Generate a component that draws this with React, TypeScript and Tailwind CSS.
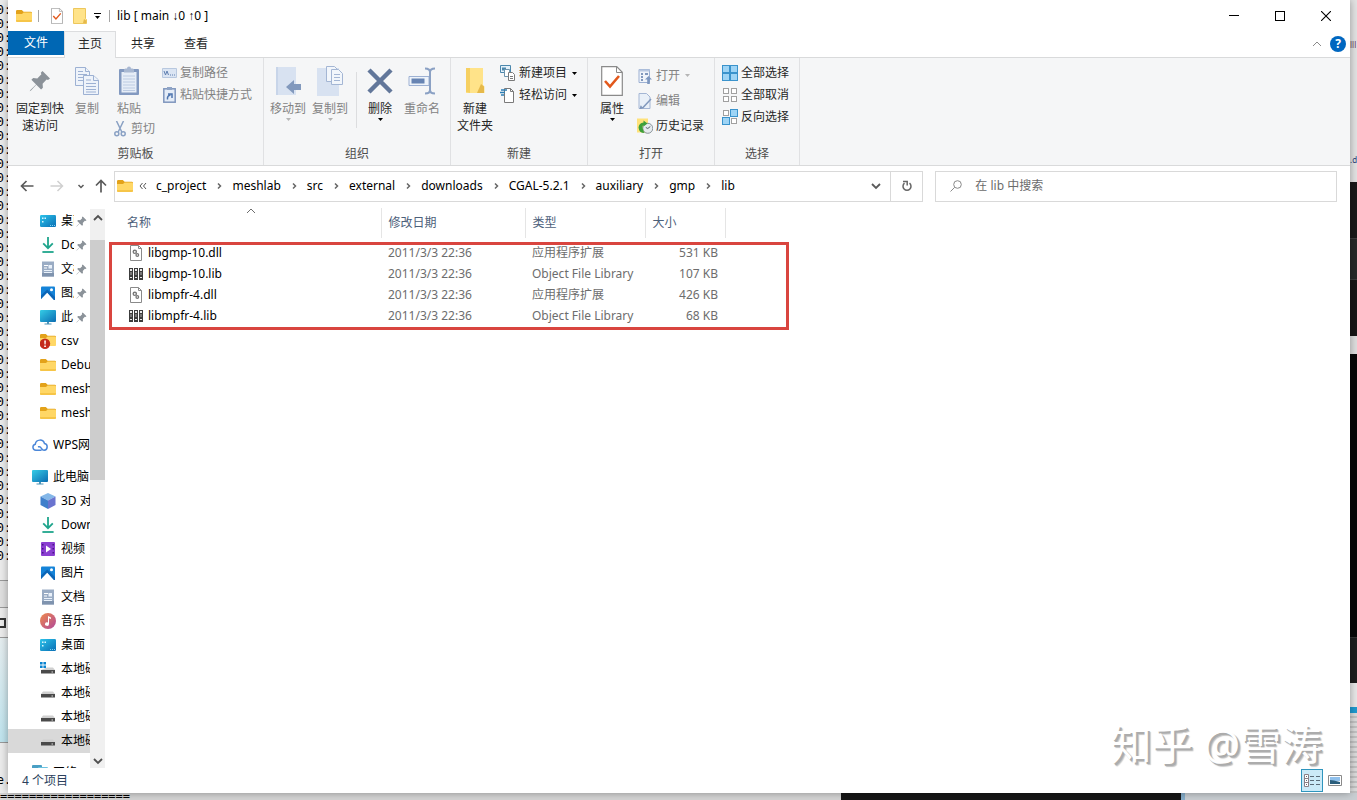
import React from "react";
import { clsx } from "clsx";

interface IconProps {
  className?: string;
}

/* ---------- Small shared glyphs ---------- */

const CaretDown = ({ className }: IconProps) => (
  <svg viewBox="0 0 5 3" className={clsx("w-[5px] h-[3px] shrink-0", className)} fill="currentColor">
    <path d="M0 0h5L2.5 3z" />
  </svg>
);

const Chevron = ({ className, d, width = 1.5 }: IconProps & { d: string; width?: number }) => (
  <svg viewBox="0 0 10 10" className={clsx("w-2.5 h-2.5 shrink-0", className)} fill="none" stroke="currentColor" strokeWidth={width}>
    <path d={d} />
  </svg>
);

const UP = "M1 7l4-4 4 4";
const DOWN = "M1 3l4 4 4-4";
const RIGHT = "M4 2.5L6.5 5 4 7.5";

const PinIcon = ({ className }: IconProps) => (
  <svg viewBox="0 0 22 22" className={className} fill="currentColor">
    <path d="M13.5 1l7.5 7.5-2 1.6-1.4-.5-4 4.2.3 4-1.8 1.8-4.8-4.8L2 20.5l-1.3.8.7-1.4 5.7-5.4-4.7-4.7L4.2 8l4.1.4 4.1-4.1-.6-1.6z" />
  </svg>
);

/* ---------- Navigation pane icons ---------- */

const FolderIcon = ({ className = "w-4 h-4" }: IconProps) => (
  <svg viewBox="0 0 16 16" className={className}>
    <path d="M0 3.2Q0 2 1.2 2h4.6l1.8 1.8h7.2Q16 3.8 16 5v3H0z" fill="#e3a21a" />
    <path d="M0 6h6l1.6-1.4h7.2Q16 4.6 16 5.8v7Q16 14 14.8 14H1.2Q0 14 0 12.8z" fill="#ffd766" />
    <path d="M0 12h16v.8Q16 14 14.8 14H1.2Q0 14 0 12.8z" fill="#f6c548" />
  </svg>
);

const FolderAlertIcon = () => (
  <svg viewBox="0 0 16 16" className="w-4 h-4">
    <path d="M0 2.2Q0 1 1.2 1h4.6l1.8 1.8h7.2Q16 2.8 16 4v3H0z" fill="#e3a21a" />
    <path d="M0 5h6l1.6-1.4h7.2Q16 3.6 16 4.8v7.4q0 .8-.8.8H0z" fill="#ffd766" />
    <circle cx="5" cy="10.8" r="5.2" fill="#c42b1c" />
    <path d="M4.2 7.4h1.7l-.3 4.2H4.5zM4.2 12.4h1.7v1.5H4.2z" fill="#fff" />
  </svg>
);

const DesktopIcon = () => (
  <svg viewBox="0 0 16 16" className="w-4 h-4">
    <defs>
      <linearGradient id="desk" x2="1" y2="1">
        <stop stopColor="#2cc3ea" />
        <stop offset="1" stopColor="#0a6fb5" />
      </linearGradient>
    </defs>
    <rect y="2" width="16" height="12" rx="1.2" fill="url(#desk)" />
    <path d="M2 4.5h1.5V6H2zM2 8h1.5v1.5H2zM4.5 4.5H6V6H4.5z" fill="#d8f5ff" />
    <path d="M10 12h1v1h-1zM12 12h1v1h-1zM14 12h1v1h-1z" fill="#7fd4f5" />
  </svg>
);

const DownloadIcon = () => (
  <svg viewBox="0 0 16 16" className="w-4 h-4" fill="none" stroke="#1fa58c" strokeWidth="1.8">
    <path d="M8 0v11M3.2 6.4L8 11.2l4.8-4.8" />
    <path d="M2.4 15h11.2" />
  </svg>
);

const DocumentIcon = () => (
  <svg viewBox="0 0 16 16" className="w-4 h-4">
    <path d="M2 .5h12v15H2z" fill="#9aacc4" />
    <path d="M2 12h12v3.5H2z" fill="#7f93ae" />
    <path d="M4 4.5h4M4 7h3" stroke="#fff" strokeWidth="1.2" />
    <path d="M8.5 4H12v3.5H8.5z" fill="#e9f1fa" />
    <path d="M4 9.5h8M4 11.5h8" stroke="#e9f1fa" />
  </svg>
);

const PictureIcon = () => (
  <svg viewBox="0 0 16 16" className="w-4 h-4">
    <rect x="1" y="1.5" width="14" height="13.5" rx="1" fill="#1583d8" />
    <path d="M1 15v-1L7.2 7.500 14 15z" fill="#fff" />
    <path d="M1 14v-3.500L7.200 4.500 15 12v3h-1L7.200 7.500z" fill="#0c65b6" />
    <circle cx="11.5" cy="4.8" r="1.5" fill="#fff" />
  </svg>
);

const PcIcon = () => (
  <svg viewBox="0 0 16 16" className="w-4 h-4">
    <defs>
      <linearGradient id="pc" x2="1" y2="1">
        <stop stopColor="#35cde6" />
        <stop offset="1" stopColor="#0b6cb2" />
      </linearGradient>
    </defs>
    <rect y="1" width="16" height="12" rx="1" fill="url(#pc)" />
    <path d="M7 13h2v1.5h2.5v1h-7v-1H7z" fill="#4d93b8" />
  </svg>
);

const CloudIcon = () => (
  <svg viewBox="0 0 16 16" className="w-4 h-4" fill="none" stroke="#4a86d8" strokeWidth="1.5" strokeLinecap="round">
    <path d="M9 13.3H3.9A3.1 3.1 0 0 1 3.3 7.2 4.7 4.7 0 0 1 12.5 6.6a3.4 3.4 0 0 1-.4 6.7c-1.6 0-2.1-1-2.8-2.200-.6-1.100-1.500-1.700-2.700-1.300" />
  </svg>
);

const CubeIcon = () => (
  <svg viewBox="0 0 16 16" className="w-4 h-4">
    <path d="M8 0l7.5 3.5L8 7.5.5 3.5z" fill="#84b7e8" />
    <path d="M.5 3.5L8 7.5V16L.5 12z" fill="#3f7fcb" />
    <path d="M15.5 3.5L8 7.5V16l7.5-4z" fill="#6a74cf" />
  </svg>
);

const VideoIcon = () => (
  <svg viewBox="0 0 16 16" className="w-4 h-4">
    <rect x="1" y="1" width="14" height="14" rx="1" fill="#8a3fd0" />
    <path d="M2 3h1.5v1.5H2zM2 7h1.5v1.5H2zM2 11h1.5v1.5H2zM12.5 3H14v1.5h-1.5zM12.5 7H14v1.5h-1.5zM12.5 11H14v1.5h-1.5z" fill="#4a148c" />
    <path d="M6 4.5L11 8l-5 3.5z" fill="#fff" />
  </svg>
);

const MusicIcon = () => (
  <svg viewBox="0 0 16 16" className="w-4 h-4">
    <defs>
      <linearGradient id="music" x2="1" y2="1">
        <stop stopColor="#f08a4b" />
        <stop offset="1" stopColor="#b0479a" />
      </linearGradient>
    </defs>
    <circle cx="8" cy="8" r="8" fill="url(#music)" />
    <path d="M8 3l3 1.5V6L9 5.2V11a2 1.8 0 1 1-1-1.5z" fill="#fff" />
  </svg>
);

const DriveIcon = () => (
  <svg viewBox="0 0 16 16" className="w-4 h-4">
    <path d="M3 6.500h10l2 2.500H1z" fill="#d0d0d0" />
    <path d="M1 9h14v3.5H1z" fill="#4a4a4a" />
    <path d="M11.5 10.5H13v1h-1.500z" fill="#dadada" />
  </svg>
);

const SystemDriveIcon = () => (
  <svg viewBox="0 0 16 16" className="w-4 h-4">
    <path d="M0 1h2.6v2.6H0zM3.4 1H6v2.6H3.4zM0 4.4h2.6V7H0zM3.4 4.4H6V7H3.4z" fill="#0a84d0" />
    <path d="M7 6.5h6L15 9H1z" fill="#d0d0d0" />
    <path d="M1 9h14v3.5H1z" fill="#4a4a4a" />
    <path d="M11.5 10.5H13v1h-1.500z" fill="#dadada" />
  </svg>
);

const NetworkIcon = () => (
  <svg viewBox="0 0 16 16" className="w-4 h-4">
    <rect x="0" y="0" width="10" height="9" rx="1" fill="#4a9fc4" />
    <rect x="6" y="2" width="10" height="9" rx="1" fill="#6cc3e0" />
  </svg>
);

/* ---------- Ribbon icons ---------- */

const CopyIcon = () => (
  <svg viewBox="0 0 26 30" className="w-[26px] h-[30px]" fill="#eef3fa" stroke="#9db1d3">
    <path d="M1.5 1.5h10l4 4v14h-14z" />
    <path d="M11.5 1.5v4h4M4 8.5h9M4 11.5h9M4 14.5h9M4 5.5h5" />
    <path d="M9.5 9.5h10l5 4.5v14.5h-15z" />
    <path d="M19.5 9.5v5h5M12 17.5h10M12 20.5h10M12 23.5h10M12 26h10M12 14h5" />
  </svg>
);

const PasteIcon = () => (
  <svg viewBox="0 0 22 30" className="w-[22px] h-[30px]">
    <rect x="1" y="3" width="20" height="26" rx="1" fill="#8299c0" />
    <path d="M3.500 6h15v20.500h-15z" fill="#e6edf7" />
    <path d="M6 4q0-1.500 1.500-1.500H9Q9 .5 11 .5t2 2h1.500Q16 2.500 16 4v2.500H6z" fill="#a8b8d2" />
    <path d="M5 10h12M5 13h12M5 16h12M5 19h12M5 22h12M5 24.5h12" stroke="#bccbe2" />
  </svg>
);

const CutIcon = () => (
  <svg viewBox="0 0 12 16" className="w-3 h-4" fill="none" stroke="#8aa1c4" strokeWidth="1.5">
    <path d="M2.5 0l5.300 11M9.500 0L4.200 11" />
    <circle cx="2.8" cy="12.8" r="2" />
    <circle cx="9.2" cy="12.8" r="2" />
  </svg>
);

const CopyPathIcon = () => (
  <svg viewBox="0 0 15 10" className="w-[15px] h-2.5" fill="none" stroke="#5f7fb0">
    <path d="M.5.5h14v9H.5z" fill="#dbe5f3" stroke="#b8c8df" />
    <path d="M2 3l1.5 4L5 3l1.5 4" />
    <path d="M8 7h1M10 7h1M12 7h1" />
  </svg>
);

const PasteShortcutIcon = () => (
  <svg viewBox="0 0 13 16" className="w-[13px] h-4">
    <rect x=".8" y="1.8" width="11.4" height="13.4" fill="#e4ecf7" stroke="#7f96bd" strokeWidth="1.5" />
    <path d="M4 0h5v3H4z" fill="#8fa4c6" />
    <path d="M4.5 12.5q-.5-4 3-4.5M5 7h4v4" fill="none" stroke="#4d74ae" strokeWidth="1.5" />
  </svg>
);

const MoveToIcon = () => (
  <svg viewBox="0 0 28 30" className="w-7 h-[30px]">
    <path d="M2 1h20v28H2z" fill="#d8e2f1" />
    <path d="M2 1h2v28H2z" fill="#c8d5e9" />
    <path d="M12 21l8-7v4h7v6h-7v4z" fill="#8299bd" />
  </svg>
);

const CopyToIcon = () => (
  <svg viewBox="0 0 28 32" className="w-7 h-8">
    <path d="M1 3h22v28H1z" fill="#d8e2f1" />
    <g fill="#f2f6fb" stroke="#a4b6d4">
      <path d="M10.5 1.5h8l3 3v12h-11z" />
      <path d="M15.5 4.5h7l4 4v11h-11zM18 9.5h6M18 12.5h6M18 15.5h6" />
    </g>
  </svg>
);

const DeleteIcon = () => (
  <svg viewBox="0 0 26 26" className="w-[26px] h-[26px]" stroke="#62779a" strokeWidth="4.5">
    <path d="M2 2l22 22M24 2L2 24" />
  </svg>
);

const RenameIcon = () => (
  <svg viewBox="0 0 28 28" className="w-7 h-7" fill="none">
    <path d="M1 9.5h20v9H1z" fill="#eef3fa" stroke="#9db1d3" />
    <path d="M3.5 11.5h13v5h-13z" fill="#6784b3" />
    <path d="M17 1.5q5 0 5 3.5v18q0 3.5-5 3.5M27 1.5q-5 0-5 3.5v18q0 3.5 5 3.5" stroke="#8ba1c4" strokeWidth="2" />
  </svg>
);

const NewFolderIcon = () => (
  <svg viewBox="0 0 20 28" className="w-5 h-7">
    <path d="M1 1h17v17l1.500 1.500V26H1z" fill="#ffe389" />
    <path d="M16 17l3 2.500V26h-7z" fill="#e6b94a" />
    <path d="M1 1h4v25l-4-1z" fill="#f6d061" />
  </svg>
);

const SmallNewFolderIcon = () => (
  <svg viewBox="0 0 14 16" className="w-3.5 h-4">
    <path d="M.5.5h12v10l1 1v4H.5z" fill="#ffe389" stroke="#edc75c" />
    <path d="M11 11l2 1.500V15h-3z" fill="#e6b94a" />
  </svg>
);

const NewItemIcon = () => (
  <svg viewBox="0 0 16 16" className="w-4 h-4" fill="#fff">
    <path d="M.5.5h10v7H.5z" fill="#e4f1fa" stroke="#4b87ad" />
    <path d="M2 2.5h4v3H2z" fill="#4b87ad" />
    <path d="M4.5 4.5h5v7h-5z" stroke="#6d94ad" />
    <path d="M8.5 7.5h4l2 2v6h-6zM10 11.5h3M10 13.5h3" stroke="#7a7a7a" />
  </svg>
);

const EasyAccessIcon = () => (
  <svg viewBox="0 0 16 16" className="w-4 h-4">
    <path d="M4.5 1.5h6l3 3v11h-9z" fill="#fff" stroke="#7a7a7a" />
    <path d="M10.5 1.5v3h3" fill="none" stroke="#7a7a7a" />
    <path d="M1 3h6M0 5.5h5M1 8h3" stroke="#2f7fb5" strokeWidth="1.3" />
  </svg>
);

const PropertiesIcon = ({ className = "w-[22px] h-[30px]" }: IconProps) => (
  <svg viewBox="0 0 22 30" className={className} fill="none">
    <path d="M.7.7h15l5.600 5.600v23H.7z" fill="#fff" stroke="#8a8a8a" strokeWidth="1.2" />
    <path d="M15.5 1v5.500H21" stroke="#8a8a8a" />
    <path d="M4 15l5 5.5L18 10" stroke="#e2581c" strokeWidth="2.6" />
  </svg>
);

const OpenIcon = () => (
  <svg viewBox="0 0 14 16" className="w-3.5 h-4">
    <path d="M1 1.5h10.5v13H1z" fill="#f0f4fa" stroke="#9db1d3" />
    <path d="M1 1.5h10.5v2H1z" fill="#b9c8e0" />
    <path d="M3 5h2v2H3zM3 8h2v2H3zM3 11h2v2H3zM7 5h3v2H7z" fill="#8299bd" />
    <path d="M10.5 8L14 11.500h-2.200V16H9.200v-4.500H7z" fill="#7e98c0" />
  </svg>
);

const EditIcon = () => (
  <svg viewBox="0 0 14 16" className="w-3.5 h-4" fill="none">
    <path d="M1 .5h7.500L12 4v11.500H1z" fill="#e9f0f8" stroke="#a4b6d4" />
    <path d="M13 6l-8 8.500-2.500.8.7-2.500" stroke="#8299bd" strokeWidth="1.5" />
  </svg>
);

const HistoryIcon = () => (
  <svg viewBox="0 0 16 16" className="w-4 h-4">
    <path d="M0 .5h11v14H0z" fill="#ffe27a" />
    <circle cx="10.8" cy="10.3" r="5" fill="#e6ebee" stroke="#8b949a" />
    <path d="M10.8 10.500l2.500-2M10.800 10.500l-2-1" fill="none" stroke="#55606a" />
    <path d="M1.500 9.500q.5-4.500 5-5L6.500 2.500l4 3-4 3V7Q4.500 8 6.500 13l1 2Q2 15 1.500 9.500z" fill="#3da03a" />
  </svg>
);

const SELECT_CELLS: [number, number][] = [[1, 1], [9, 1], [1, 9], [9, 9]];

const SelectIcon = ({ filled }: { filled: boolean[] }) => (
  <svg viewBox="0 0 16 16" className="w-4 h-4">
    {SELECT_CELLS.map(([x, y], i) => (
      <rect
        key={i}
        x={filled[i] ? x - 0.5 : x + 0.5}
        y={filled[i] ? y - 0.5 : y + 0.5}
        width={filled[i] ? 7 : 5}
        height={filled[i] ? 7 : 5}
        fill={filled[i] ? "#9ed4f5" : "#fff"}
        stroke={filled[i] ? "#3a93cc" : "#a0a0a0"}
      />
    ))}
  </svg>
);

/* ---------- File icons ---------- */

const DllIcon = () => (
  <svg viewBox="0 0 16 16" className="w-4 h-4 shrink-0" fill="none">
    <path d="M2.5.5h8l3 3v12h-11z" fill="#fff" stroke="#8a8a8a" />
    <path d="M10.5.5v3h3" stroke="#8a8a8a" />
    <circle cx="6.8" cy="6.8" r="1.6" stroke="#777" strokeWidth="1.4" />
    <circle cx="9.3" cy="10" r="1.300" stroke="#777" strokeWidth="1.3" />
  </svg>
);

const LibIcon = () => (
  <svg viewBox="0 0 16 16" className="w-4 h-4 shrink-0">
    {[1, 6, 11].map((x) => (
      <g key={x}>
        <rect x={x} y="2" width="4" height="12" fill="#3c3c3c" />
        <path d={`M${x + 1} 3h2v2h-2zM${x + 1} 11h2v1h-2z`} fill="#e8e8e8" />
        <path d={`M${x + 1} 6h2v3h-2z`} fill="#777" />
      </g>
    ))}
  </svg>
);

/* ---------- Data ---------- */

interface NavItem {
  label: string;
  icon: React.ReactNode;
  pinned?: boolean;
  root?: boolean;
  selected?: boolean;
}

const navGroups: NavItem[][] = [
  [
    { label: "桌面", icon: <DesktopIcon />, pinned: true },
    { label: "Downloads", icon: <DownloadIcon />, pinned: true },
    { label: "文档", icon: <DocumentIcon />, pinned: true },
    { label: "图片", icon: <PictureIcon />, pinned: true },
    { label: "此电脑", icon: <PcIcon />, pinned: true },
    { label: "csv", icon: <FolderAlertIcon /> },
    { label: "Debug", icon: <FolderIcon /> },
    { label: "meshlab", icon: <FolderIcon /> },
    { label: "meshlab", icon: <FolderIcon /> },
  ],
  [{ label: "WPS网盘", icon: <CloudIcon />, root: true }],
  [
    { label: "此电脑", icon: <PcIcon />, root: true },
    { label: "3D 对象", icon: <CubeIcon /> },
    { label: "Downloads", icon: <DownloadIcon /> },
    { label: "视频", icon: <VideoIcon /> },
    { label: "图片", icon: <PictureIcon /> },
    { label: "文档", icon: <DocumentIcon /> },
    { label: "音乐", icon: <MusicIcon /> },
    { label: "桌面", icon: <DesktopIcon /> },
    { label: "本地磁盘", icon: <SystemDriveIcon /> },
    { label: "本地磁盘", icon: <DriveIcon /> },
    { label: "本地磁盘", icon: <DriveIcon /> },
    { label: "本地磁盘", icon: <DriveIcon />, selected: true },
  ],
  [{ label: "网络", icon: <NetworkIcon />, root: true }],
];

const crumbs = ["c_project", "meshlab", "src", "external", "downloads", "CGAL-5.2.1", "auxiliary", "gmp", "lib"];

const files = [
  { name: "libgmp-10.dll", date: "2011/3/3 22:36", type: "应用程序扩展", size: "531 KB" },
  { name: "libgmp-10.lib", date: "2011/3/3 22:36", type: "Object File Library", size: "107 KB" },
  { name: "libmpfr-4.dll", date: "2011/3/3 22:36", type: "应用程序扩展", size: "426 KB" },
  { name: "libmpfr-4.lib", date: "2011/3/3 22:36", type: "Object File Library", size: "68 KB" },
];

/* ---------- Ribbon ---------- */

interface RibbonButtonProps {
  icon: React.ReactNode;
  lines: string[];
  className?: string;
  disabled?: boolean;
  menu?: boolean;
}

const LargeButton = ({ icon, lines, className, disabled, menu }: RibbonButtonProps) => (
  <button
    type="button"
    disabled={disabled}
    className={clsx("flex flex-col items-center shrink-0 leading-[17px] whitespace-nowrap", disabled ? "text-[#838383]" : "text-[#262626]", className)}
  >
    <span className="flex items-center justify-center h-[38px]">{icon}</span>
    {lines.map((line) => (
      <span key={line}>{line}</span>
    ))}
    {menu && <CaretDown className={clsx("mt-px", disabled ? "text-[#b5b5b5]" : "text-black")} />}
  </button>
);

interface SmallButtonProps {
  icon: React.ReactNode;
  label: string;
  disabled?: boolean;
  menu?: boolean;
  className?: string;
}

const SmallButton = ({ icon, label, disabled, menu, className = "h-[22px]" }: SmallButtonProps) => (
  <button
    type="button"
    disabled={disabled}
    className={clsx("flex items-center gap-[3px] whitespace-nowrap", disabled ? "text-[#838383]" : "text-[#262626]", className)}
  >
    <span className="flex items-center justify-center w-4 shrink-0">{icon}</span>
    <span>{label}</span>
    {menu && <CaretDown className={clsx("ml-0.5", disabled ? "text-[#b5b5b5]" : "text-black")} />}
  </button>
);

const RibbonGroup = ({ label, className, children }: { label: string; className: string; children: React.ReactNode }) => (
  <section className={clsx("flex flex-col shrink-0 pt-1 border-r border-[#e0e1e3]", className)}>
    <div className="flex items-start h-[83px]">{children}</div>
    <div className="text-center leading-[18px] text-[#4d4d4d]">{label}</div>
  </section>
);

const Ribbon = () => (
  <div className="flex h-[108px] shrink-0 bg-[#f5f6f7] border-b border-[#d9dadb]">
    <RibbonGroup label="剪贴板" className="w-64">
      <LargeButton icon={<PinIcon className="w-[22px] h-[22px] text-[#8b9299]" />} lines={["固定到快", "速访问"]} className="w-14 ml-1" />
      <LargeButton icon={<CopyIcon />} lines={["复制"]} className="w-[38px]" disabled />
      <div className="flex flex-col gap-px w-[46px] shrink-0">
        <LargeButton icon={<PasteIcon />} lines={["粘贴"]} disabled />
        <SmallButton icon={<CutIcon />} label="剪切" className="h-[22px] pl-1.5" disabled />
      </div>
      <div className="pl-[9px]">
        <SmallButton icon={<CopyPathIcon />} label="复制路径" disabled />
        <SmallButton icon={<PasteShortcutIcon />} label="粘贴快捷方式" disabled />
      </div>
    </RibbonGroup>

    <RibbonGroup label="组织" className="w-[187px]">
      <LargeButton icon={<MoveToIcon />} lines={["移动到"]} className="w-[42px] ml-[3px]" disabled menu />
      <LargeButton icon={<CopyToIcon />} lines={["复制到"]} className="w-[42px]" disabled menu />
      <div className="w-px h-14 mt-2.5 ml-[5px] mr-0.5 bg-[#dcdddf]" />
      <LargeButton icon={<DeleteIcon />} lines={["删除"]} className="w-[42px]" menu />
      <LargeButton icon={<RenameIcon />} lines={["重命名"]} className="w-[42px]" disabled />
    </RibbonGroup>

    <RibbonGroup label="新建" className="w-[137px]">
      <LargeButton icon={<NewFolderIcon />} lines={["新建", "文件夹"]} className="w-10 ml-1" />
      <div className="pl-[5px]">
        <SmallButton icon={<NewItemIcon />} label="新建项目" menu />
        <SmallButton icon={<EasyAccessIcon />} label="轻松访问" menu />
      </div>
    </RibbonGroup>

    <RibbonGroup label="打开" className="w-[127px]">
      <LargeButton icon={<PropertiesIcon />} lines={["属性"]} className="w-10 ml-1" menu />
      <div className="pl-[5px] pt-px">
        <SmallButton icon={<OpenIcon />} label="打开" className="h-[25px]" disabled menu />
        <SmallButton icon={<EditIcon />} label="编辑" className="h-[25px]" disabled />
        <SmallButton icon={<HistoryIcon />} label="历史记录" className="h-[25px]" />
      </div>
    </RibbonGroup>

    <RibbonGroup label="选择" className="w-[85px]">
      <div className="pl-[7px]">
        <SmallButton icon={<SelectIcon filled={[true, true, true, true]} />} label="全部选择" />
        <SmallButton icon={<SelectIcon filled={[false, false, false, false]} />} label="全部取消" />
        <SmallButton icon={<SelectIcon filled={[false, true, true, false]} />} label="反向选择" />
      </div>
    </RibbonGroup>
  </div>
);

/* ---------- Window chrome ---------- */

const TitleBar = () => (
  <header className="flex items-center h-[31px] shrink-0 pl-2 pr-px">
    <FolderIcon className="w-4 h-4" />
    <span className="w-px h-3 ml-1.5 bg-[#a5a5a5]" />
    <button type="button" aria-label="属性" className="ml-3">
      <PropertiesIcon className="w-3 h-4" />
    </button>
    <button type="button" aria-label="新建文件夹" className="ml-2.5">
      <SmallNewFolderIcon />
    </button>
    <button type="button" aria-label="自定义快速访问工具栏" className="flex flex-col items-center gap-0.5 ml-[7px]">
      <span className="w-[7px] h-px bg-black" />
      <CaretDown className="text-black" />
    </button>
    <span className="w-px h-3 ml-2 bg-[#a5a5a5]" />
    <h1 className="ml-[7px] text-black">
      lib [ main <span className="font-['Liberation_Sans',sans-serif]">↓</span>0{" "}
      <span className="font-['Liberation_Sans',sans-serif]">↑</span>0 ]
    </h1>
    <div className="flex h-full ml-auto">
      <button type="button" aria-label="最小化" className="flex items-center justify-center w-[46px]">
        <span className="w-2.5 h-px bg-black" />
      </button>
      <button type="button" aria-label="最大化" className="flex items-center justify-center w-[46px]">
        <span className="w-2.5 h-2.5 border border-black" />
      </button>
      <button type="button" aria-label="关闭" className="flex items-center justify-center w-[46px]">
        <svg viewBox="0 0 10 10" className="w-2.5 h-2.5" stroke="#000" strokeWidth="1.1">
          <path d="M0 0l10 10M10 0L0 10" />
        </svg>
      </button>
    </div>
  </header>
);

const RibbonTabs = () => (
  <nav className="flex items-start h-[27px] shrink-0 border-b border-[#d9dadb] text-[#262626]">
    <button type="button" className="w-14 h-6 bg-[#0067b4] text-white">文件</button>
    <button type="button" className="w-[52px] h-[27px] pb-[3px] bg-[#f5f6f7] border border-b-0 border-[#dcdddf]">主页</button>
    <button type="button" className="w-[54px] h-[25px]">共享</button>
    <button type="button" className="w-[52px] h-[25px]">查看</button>
    <div className="flex items-center gap-2 h-[26px] ml-auto mr-1">
      <button type="button" aria-label="最小化功能区">
        <Chevron d={UP} width={1} className="text-[#8a8a8a]" />
      </button>
      <button type="button" aria-label="帮助" className="w-4 h-4 rounded-full bg-[#0067c0] text-white font-bold leading-4">
        ?
      </button>
    </div>
  </nav>
);

const AddressBar = () => (
  <div className="flex items-center h-10 shrink-0 pl-3 pr-[13px]">
    <div className="flex items-center w-[94px] shrink-0 text-[#5a5a5a]">
      <button type="button" aria-label="后退">
        <svg viewBox="0 0 14 12" className="w-3.5 h-3" fill="none" stroke="currentColor" strokeWidth="1.7">
          <path d="M13.5 6H2M6.5 1l-5 5 5 5" />
        </svg>
      </button>
      <button type="button" aria-label="前进" disabled className="ml-4 text-[#d0d0d0]">
        <svg viewBox="0 0 14 12" className="w-3.5 h-3" fill="none" stroke="currentColor" strokeWidth="1.5">
          <path d="M.5 6H12M7.5 1l5 5-5 5" />
        </svg>
      </button>
      <button type="button" aria-label="最近浏览的位置" className="ml-3">
        <Chevron d="M2.5 4L5 6.500 7.500 4" />
      </button>
      <button type="button" aria-label="上移" className="ml-[9px]">
        <svg viewBox="0 0 12 14" className="w-3 h-3.5" fill="none" stroke="currentColor" strokeWidth="1.7">
          <path d="M6 13.5V2M1 6.5l5-5 5 5" />
        </svg>
      </button>
    </div>

    <div className="flex flex-1 items-center h-[31px] border border-[#d9d9d9] min-w-0">
      <FolderIcon className="w-4 h-4 ml-0.5 shrink-0" />
      <svg viewBox="0 0 8 8" className="w-2 h-2 ml-1.5 mr-[9px] shrink-0" fill="none" stroke="#555">
        <path d="M3.5 1L1 4l2.500 3M7 1L4.500 4 7 7" />
      </svg>
      <ol className="flex items-center flex-1 min-w-0 overflow-hidden text-black">
        {crumbs.map((crumb, i) => (
          <li key={crumb} className="flex items-center">
            <button type="button">{crumb}</button>
            {i < crumbs.length - 1 && (
              <span className="flex justify-center w-[26px] text-[#666]">
                <Chevron d={RIGHT} />
              </span>
            )}
          </li>
        ))}
      </ol>
      <button type="button" aria-label="历史位置" className="flex items-center justify-center w-7 h-full text-[#5a5a5a]">
        <Chevron d={DOWN} width={1.8} />
      </button>
      <button type="button" aria-label="刷新" className="flex items-center justify-center w-8 h-full border-l border-[#d9d9d9] text-[#666]">
        <svg viewBox="0 0 12 12" className="w-3 h-3" fill="none" stroke="currentColor" strokeWidth="1.5">
          <path d="M8.500 3.200A4 4 0 1 1 3.500 3.200" />
          <path d="M2 1.500h4.200V5.500" />
        </svg>
      </button>
    </div>

    <label className="flex items-center w-[30.5%] h-[31px] ml-3 shrink-0 border border-[#d9d9d9]">
      <svg viewBox="0 0 12 12" className="w-3 h-3 ml-3.5 shrink-0" fill="none" stroke="#8a8a8a">
        <circle cx="7.5" cy="4.5" r="3.8" />
        <path d="M4.700 7.300L.5 11.500" />
      </svg>
      <input
        type="search"
        aria-label="搜索"
        placeholder="在 lib 中搜索"
        className="flex-1 min-w-0 ml-[13px] outline-none bg-transparent placeholder:text-[#6b6b6b]"
      />
    </label>
  </div>
);

/* ---------- Body ---------- */

const NavigationPane = () => (
  <aside className="flex w-[97px] shrink-0 pt-[3px]">
    <div className="flex flex-col flex-1 gap-2 min-w-0 overflow-hidden">
      {navGroups.map((group, g) => (
        <ul key={g} className="shrink-0">
          {group.map((item, i) => (
            <li key={i}>
              <button
                type="button"
                className={clsx(
                  "flex items-center gap-[5px] w-full h-6 text-left text-black whitespace-nowrap",
                  item.root ? "pl-6" : "pl-8",
                  item.selected && "bg-[#d9d9d9]"
                )}
              >
                <span className="shrink-0">{item.icon}</span>
                <span className="flex-1 min-w-0 overflow-hidden">{item.label}</span>
                {item.pinned && <PinIcon className="w-[11px] h-[11px] -ml-[3px] mr-[3px] shrink-0 text-[#8b9299]" />}
              </button>
            </li>
          ))}
        </ul>
      ))}
    </div>
    <div className="flex flex-col w-[15px] shrink-0 bg-[#f0f0f0] text-[#505050]">
      <button type="button" aria-label="向上滚动" className="flex justify-center h-[31px] pt-1">
        <Chevron d={UP} width={1.8} />
      </button>
      <div className="w-full h-[43%] bg-[#cdcdcd]" />
      <button type="button" aria-label="向下滚动" className="flex justify-center mt-auto pb-0.5">
        <Chevron d={DOWN} width={1.8} />
      </button>
    </div>
  </aside>
);

const FileList = () => (
  <main className="relative flex-1 min-w-0 pt-0.5">
    <table className="table-fixed border-collapse w-[620px] text-left text-[#6d6d6d]">
      <colgroup>
        <col className="w-[276px]" />
        <col className="w-36" />
        <col className="w-[120px]" />
        <col className="w-20" />
      </colgroup>
      <thead>
        <tr className="h-[30px] text-[#4c607a]">
          <th className="relative pl-[22px] font-normal border-r border-[#e5e5e5]">
            <button type="button">名称</button>
            <Chevron d={UP} width={1} className="absolute -top-0.5 left-[141px] text-[#6d6d6d]" />
          </th>
          <th className="pl-[7px] font-normal border-r border-[#e5e5e5]"><button type="button">修改日期</button></th>
          <th className="pl-[7px] font-normal border-r border-[#e5e5e5]"><button type="button">类型</button></th>
          <th className="pl-[7px] font-normal border-r border-[#e5e5e5]"><button type="button">大小</button></th>
        </tr>
      </thead>
      <tbody className="before:block before:h-1">
        {files.map((file) => (
          <tr key={file.name} className="h-[21px]">
            <td className="pl-[23px]">
              <span className="flex items-center gap-1 text-black">
                {file.name.endsWith(".dll") ? <DllIcon /> : <LibIcon />}
                {file.name}
              </span>
            </td>
            <td className="pl-[7px]">{file.date}</td>
            <td className="pl-[7px] whitespace-nowrap">{file.type}</td>
            <td className="pr-[7px] text-right">{file.size}</td>
          </tr>
        ))}
      </tbody>
    </table>

    {/* Highlight drawn over the listed files */}
    <div className="absolute top-9 left-1 w-[680px] h-[88px] border-3 border-[#d9453f] pointer-events-none" />

    {/* Watermark */}
    <div className="absolute right-7 bottom-0 text-[41px] leading-[48px] text-white whitespace-nowrap pointer-events-none [text-shadow:2px_2px_0_#acacac,3px_3px_1px_#c4c4c4]">
      知乎 @雪涛
    </div>
  </main>
);

const StatusBar = () => (
  <footer className="flex items-center h-[25px] shrink-0 pl-3.5 pr-[7px] text-[#2b3f5c]">
    <span>4 个项目</span>
    <div className="flex items-center gap-1 ml-auto">
      <button type="button" aria-label="详细信息" className="flex items-center justify-center w-[22px] h-[23px] bg-[#cbeaf8] border border-[#2f95bd]">
        <svg viewBox="0 0 16 13" className="w-4 h-[13px]" fill="none" stroke="#5b6b78">
          <path d="M.5.5h4v12h-4zM.5 4.500h4M.5 8.500h4" fill="#fff" stroke="#8a7f86" />
          <path d="M2 2.5h1M2 6.5h1M2 10.5h1M6 2.5h4M6 6.5h4M6 10.5h4M12 2.5h4M12 6.5h4M12 10.5h4" />
        </svg>
      </button>
      <button type="button" aria-label="大缩略图" className="px-px">
        <svg viewBox="0 0 14 11" className="w-3.5 h-[11px]">
          <path d="M.5.5h13v10H.5z" fill="#fff" stroke="#8a8a8a" />
          <path d="M2 2h10v4H2z" fill="#8fc0ec" />
          <path d="M2 5l4 .5 6 1.500v2H2z" fill="#2a5d7c" />
        </svg>
      </button>
    </div>
  </footer>
);

/* ---------- Windows behind the explorer ---------- */

const LeftBackdrop = () => (
  <div className="flex flex-col w-2 shrink-0 overflow-hidden bg-[#ececec] font-['DejaVu_Sans_Mono',monospace] text-black">
    <div className="pt-[3px] pb-[17px]">
      {Array.from({ length: 40 }, (_, i) => (
        <div key={i} className="flex justify-center h-3.5 leading-[14px]">0:</div>
      ))}
    </div>
    <div className="h-7 shrink-0 border-y border-[#9a9a9a] bg-[#e0e0e0]" />
    <div className="h-[30px] shrink-0 pt-2.5 border-b border-[#9a9a9a]">
      <div className="w-1.5 h-2.5 border-2 border-l-0 border-[#333]" />
    </div>
    <div className="h-[105px] shrink-0 bg-linear-to-b from-[#e6eef0] to-[#bfe4ee] border-b border-[#9a9a9a]" />
    <div className="flex justify-center mt-[30px] leading-[14px]">e.</div>
  </div>
);

const RightBackdrop = () => (
  <div className="flex flex-col w-[7px] shrink-0 overflow-hidden bg-[#e3e3e3]">
    <div className="h-[182px] shrink-0 pt-[38px] text-[8px] leading-[14px] text-[#6a3a5a]">
      lll
      <div className="pt-[101px] text-[#2a3f7a]">.d</div>
    </div>
    <div className="h-14 shrink-0 bg-[#191919]" />
    <div className="h-[42px] shrink-0 bg-[#272828] border-y border-[#3c3c3c]" />
    <div className="h-14 shrink-0 bg-[#161616]" />
    <div className="h-[18px] shrink-0 bg-[#dedede]" />
    <div className="h-[283px] shrink-0 bg-[#070707]" />
    <div className="h-[46px] shrink-0 bg-[#1d1e1e] border-t border-[#333]" />
    <div className="h-6 shrink-0 bg-[#e8e8e8]" />
    <div className="h-1.5 shrink-0 bg-[#1f9ad0]" />
    <div className="flex-1 bg-[repeating-linear-gradient(#dcdcdc_0px,#dcdcdc_3px,#a9a9a9_4px,#dcdcdc_5px)]" />
  </div>
);

const BottomBackdrop = () => (
  <div className="flex h-[7px] shrink-0 overflow-hidden bg-[#d4d4d4]">
    <div className="w-[62%] leading-[7px] font-['DejaVu_Sans_Mono',monospace] text-black">==================</div>
    <div className="w-[25%] bg-[#171717]" />
    <div className="flex-1 bg-[#c9ced2] border-l-4 border-[#86aecb]" />
  </div>
);

export default function App() {
  return (
    <div className="flex flex-col h-screen overflow-hidden bg-[#e3e3e3] text-xs font-['Noto_Sans','Noto_Sans_CJK_SC',sans-serif]">
      <div className="flex flex-1 min-h-0">
        <LeftBackdrop />
        <div className="relative flex flex-col flex-1 min-w-0 bg-white shadow-[0_0_8px_rgba(0,0,0,0.35)]">
          <TitleBar />
          <RibbonTabs />
          <Ribbon />
          <AddressBar />
          <div className="flex flex-1 min-h-0">
            <NavigationPane />
            <FileList />
          </div>
          <StatusBar />
        </div>
        <RightBackdrop />
      </div>
      <BottomBackdrop />
    </div>
  );
}
